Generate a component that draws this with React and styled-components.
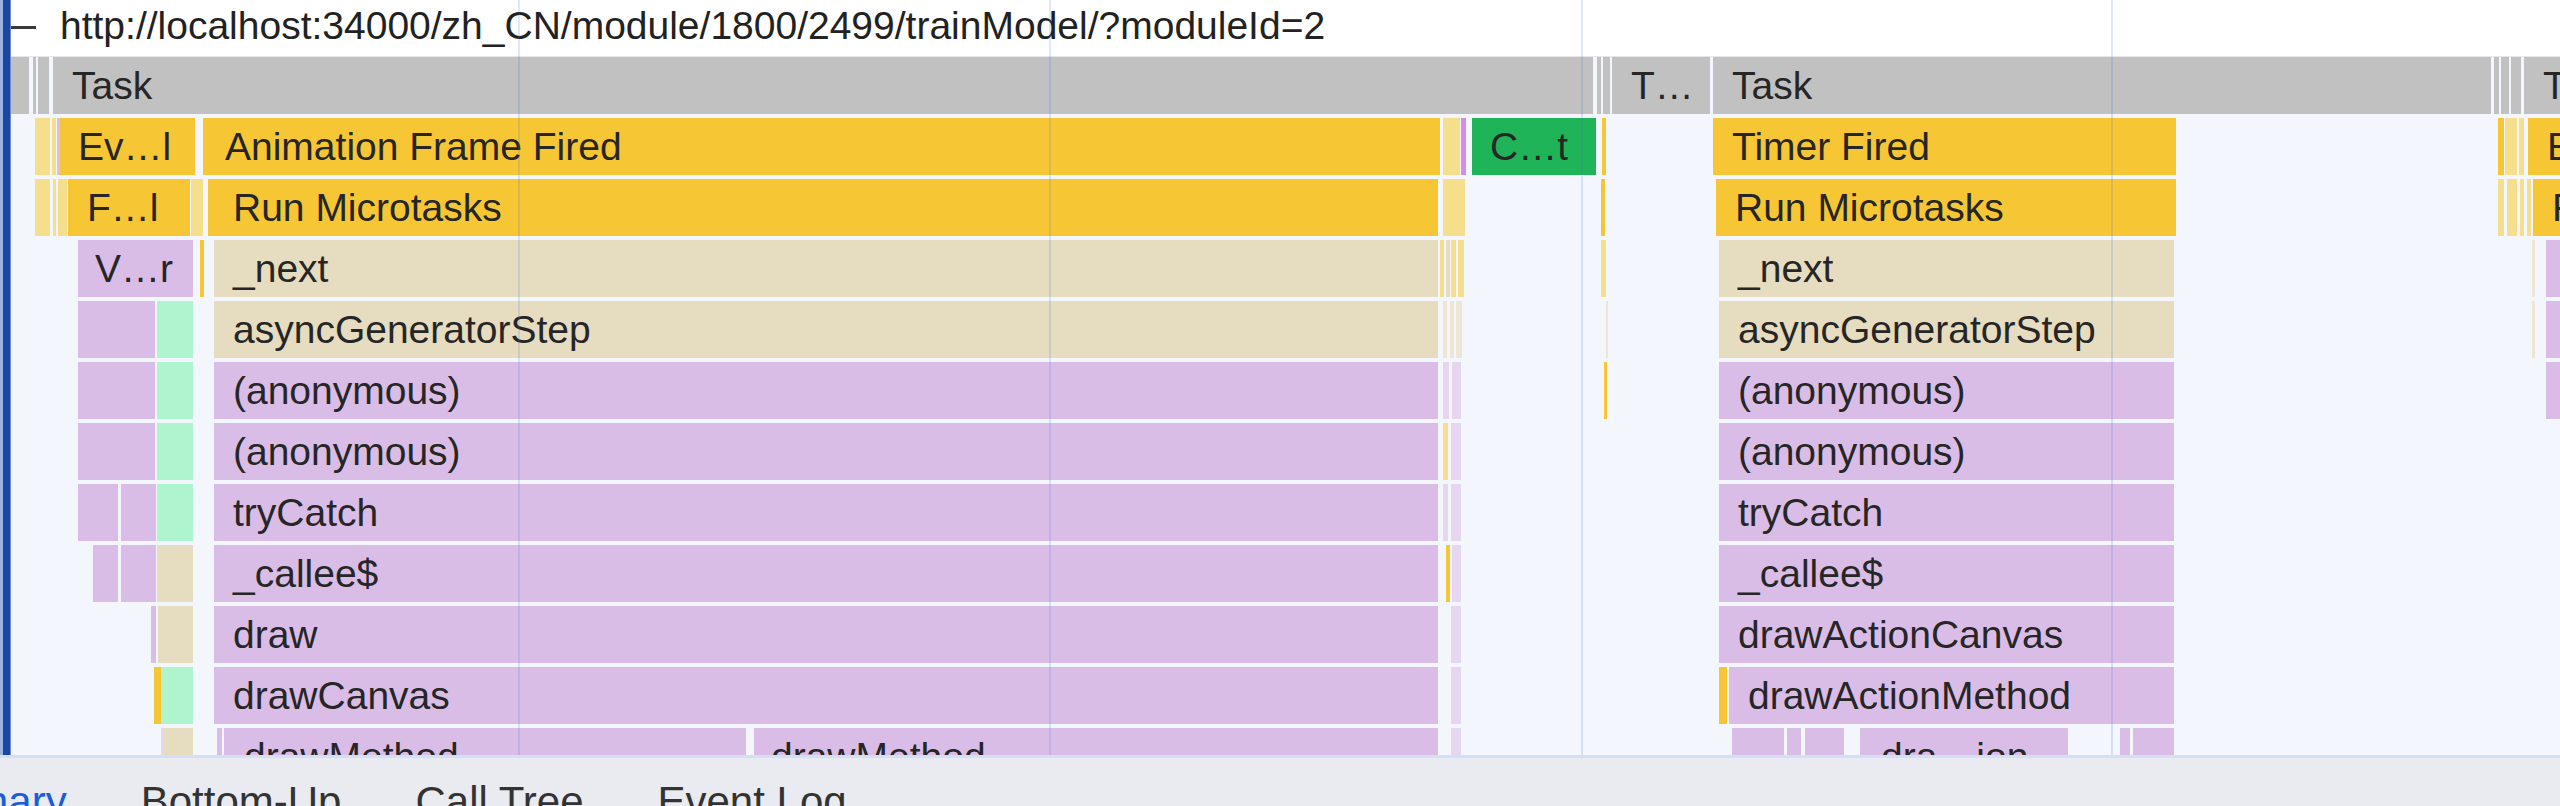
import styled, { createGlobalStyle } from "styled-components";

const GlobalStyle = createGlobalStyle`
  html, body {
    margin: 0;
    padding: 0;
    background: #ffffff;
    overflow: hidden;
  }
  body {
    font-family: "Liberation Sans", Arial, sans-serif;
  }
`;

const colors = {
  gray: "#c1c1c1",
  yellow: "#f7c634",
  ltYellow: "#f5de8c",
  tan: "#e6dcbf",
  ltTan: "#eee6d2",
  purple: "#dabde6",
  ltPurple: "#e7d6ef",
  mint: "#adf4cf",
  green: "#1fb457",
  magenta: "#d08ef2",
};

// [left, width, colour, label, textPadding]
const rows = [
  [
    [0, 29, "gray"],
    [33, 3, "gray"],
    [38, 11, "gray"],
    [53, 1540, "gray", "Task"],
    [1597, 4, "gray"],
    [1603, 7, "gray"],
    [1612, 98, "gray", "T…"],
    [1713, 778, "gray", "Task"],
    [2494, 5, "gray"],
    [2501, 8, "gray"],
    [2511, 10, "gray"],
    [2524, 80, "gray", "Task"],
  ],
  [
    [35, 15, "ltYellow"],
    [52, 4, "ltYellow"],
    [57, 3, "purple"],
    [60, 135, "yellow", "Ev…l", 18],
    [203, 1237, "yellow", "Animation Frame Fired", 22],
    [1443, 17, "ltYellow"],
    [1461, 5, "magenta"],
    [1472, 124, "green", "C…t", 18],
    [1602, 4, "yellow"],
    [1713, 463, "yellow", "Timer Fired"],
    [2498, 6, "yellow"],
    [2505, 12, "ltYellow"],
    [2519, 5, "ltYellow"],
    [2528, 80, "yellow", "Event"],
  ],
  [
    [35, 15, "ltYellow"],
    [53, 3, "ltYellow"],
    [58, 9, "ltYellow"],
    [68, 122, "yellow", "F…l"],
    [191, 12, "ltYellow"],
    [208, 1230, "yellow", "Run Microtasks", 25],
    [1443, 22, "ltYellow"],
    [1601, 4, "yellow"],
    [1716, 460, "yellow", "Run Microtasks"],
    [2498, 6, "ltYellow"],
    [2507, 10, "ltYellow"],
    [2520, 4, "ltYellow"],
    [2527, 4, "ltYellow"],
    [2533, 60, "yellow", "Run Microtasks"],
  ],
  [
    [78, 115, "purple", "V…r", 17],
    [200, 4, "yellow"],
    [214, 1224, "tan", "_next"],
    [1440, 4, "ltYellow"],
    [1446, 4, "tan"],
    [1451, 5, "ltYellow"],
    [1458, 6, "ltYellow"],
    [1601, 5, "ltYellow"],
    [1719, 455, "tan", "_next"],
    [2532, 3, "ltTan"],
    [2546, 40, "purple"],
  ],
  [
    [78, 77, "purple"],
    [157, 36, "mint"],
    [214, 1224, "tan", "asyncGeneratorStep"],
    [1443, 4, "ltTan"],
    [1450, 4, "ltTan"],
    [1456, 6, "ltTan"],
    [1606, 2, "ltTan"],
    [1719, 455, "tan", "asyncGeneratorStep"],
    [2532, 3, "ltTan"],
    [2546, 40, "purple"],
  ],
  [
    [78, 77, "purple"],
    [157, 36, "mint"],
    [214, 1224, "purple", "(anonymous)"],
    [1443, 6, "ltPurple"],
    [1452, 9, "ltPurple"],
    [1604, 3, "yellow"],
    [1719, 455, "purple", "(anonymous)"],
    [2546, 40, "purple"],
  ],
  [
    [78, 77, "purple"],
    [157, 36, "mint"],
    [214, 1224, "purple", "(anonymous)"],
    [1443, 5, "ltYellow"],
    [1451, 10, "ltPurple"],
    [1719, 455, "purple", "(anonymous)"],
  ],
  [
    [78, 40, "purple"],
    [121, 35, "purple"],
    [157, 36, "mint"],
    [214, 1224, "purple", "tryCatch"],
    [1443, 5, "ltPurple"],
    [1451, 10, "ltPurple"],
    [1719, 455, "purple", "tryCatch"],
  ],
  [
    [93, 25, "purple"],
    [121, 35, "purple"],
    [157, 36, "tan"],
    [214, 1224, "purple", "_callee$"],
    [1446, 4, "yellow"],
    [1452, 9, "ltPurple"],
    [1719, 455, "purple", "_callee$"],
  ],
  [
    [151, 5, "purple"],
    [158, 35, "tan"],
    [214, 1224, "purple", "draw"],
    [1451, 10, "ltPurple"],
    [1719, 455, "purple", "drawActionCanvas"],
  ],
  [
    [154, 7, "yellow"],
    [161, 32, "mint"],
    [214, 1224, "purple", "drawCanvas"],
    [1451, 10, "ltPurple"],
    [1719, 8, "yellow"],
    [1729, 445, "purple", "drawActionMethod"],
  ],
  [
    [161, 2, "ltPurple"],
    [163, 30, "tan"],
    [217, 5, "purple"],
    [224, 522, "purple", "drawMethod", 20],
    [754, 684, "purple", "drawMethod", 17],
    [1451, 10, "ltPurple"],
    [1732, 52, "purple"],
    [1787, 14, "purple"],
    [1805, 39, "purple"],
    [1860, 208, "purple", "dra…ion", 21],
    [2120, 10, "purple"],
    [2133, 41, "purple"],
  ],
];

const gridLines = [518, 1049, 1581, 2111];

const tabs = [
  { name: "Summary", active: true },
  { name: "Bottom-Up" },
  { name: "Call Tree" },
  { name: "Event Log" },
];

const Page = styled.div`
  width: 2560px;
  height: 806px;
  display: flex;
  flex-direction: column;
  overflow: hidden;
`;

const Viewport = styled.div`
  position: relative;
  flex: none;
  height: 755px;
  display: flex;
  flex-direction: column;
  overflow: hidden;
  background: #f3f6fd;
`;

const Header = styled.div`
  flex: none;
  height: 57px;
  box-sizing: border-box;
  display: flex;
  align-items: center;
  padding: 0 0 4px 11px;
  background: #ffffff;
  border-bottom: 1px solid #e4e6ea;
  font-size: 39px;
  color: #222222;
  white-space: nowrap;
`;

const Collapse = styled.span`
  flex: none;
  width: 25px;
  height: 3px;
  margin: 2px 24px 0 0;
  background: #3a3a3a;
`;

const Rows = styled.div`
  display: flex;
  flex-direction: column;
  gap: 4px;
`;

const Row = styled.div`
  position: relative;
  flex: none;
  height: 57px;
`;

const Entry = styled.div`
  position: absolute;
  top: 0;
  bottom: 0;
  box-sizing: border-box;
  padding-left: ${(p) => p.$pad}px;
  background: ${(p) => colors[p.$color]};
  color: #262626;
  font-size: 39px;
  line-height: 57px;
  white-space: nowrap;
  overflow: hidden;
`;

const GridLine = styled.div`
  position: absolute;
  top: 0;
  bottom: 0;
  width: 2px;
  background: rgba(70, 110, 200, 0.17);
  pointer-events: none;
`;

const SelectionEdge = styled.div`
  position: absolute;
  top: 0;
  bottom: 0;
  left: 0;
  width: 11px;
  background: linear-gradient(
    to right,
    #9cb3e2 0 3px,
    #1c46a4 3px 10px,
    #6f8dcc 10px 11px
  );
`;

const TabBar = styled.div`
  flex: none;
  height: 51px;
  box-sizing: border-box;
  border-top: 3px solid #d3dff4;
  background: #e9ebf1;
  padding-top: 23px;
  overflow: hidden;
`;

const TabList = styled.div`
  display: flex;
  gap: 74px;
  margin-left: -113px;
`;

const Tab = styled.div`
  flex: none;
  font-size: 42px;
  line-height: 42px;
  color: ${(p) => (p.$active ? "#1a5fd8" : "#333333")};
  white-space: nowrap;
`;

export default function App() {
  return (
    <Page>
      <GlobalStyle />
      <Viewport>
        <Header>
          <Collapse />
          http://localhost:34000/zh_CN/module/1800/2499/trainModel/?moduleId=2
        </Header>
        <Rows>
          {rows.map((entries, i) => (
            <Row key={i}>
              {entries.map(([left, width, color, label, pad], j) => (
                <Entry
                  key={j}
                  $color={color}
                  $pad={label ? pad ?? 19 : 0}
                  style={{ left, width }}
                >
                  {label}
                </Entry>
              ))}
            </Row>
          ))}
        </Rows>
        {gridLines.map((x) => (
          <GridLine key={x} style={{ left: x }} />
        ))}
        <SelectionEdge />
      </Viewport>
      <TabBar>
        <TabList>
          {tabs.map((t) => (
            <Tab key={t.name} $active={t.active}>
              {t.name}
            </Tab>
          ))}
        </TabList>
      </TabBar>
    </Page>
  );
}
